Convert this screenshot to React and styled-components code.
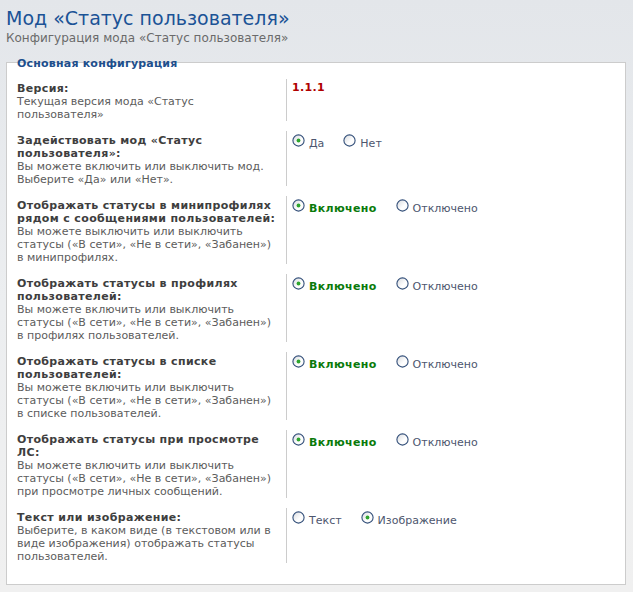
import React from 'react';
import styled, { createGlobalStyle } from 'styled-components';

const GlobalStyle = createGlobalStyle`
  html, body {
    margin: 0;
    padding: 0;
  }
  body {
    background: linear-gradient(#e3e6ea 0, #eceef0 300px, #f0f0f0 592px);
    min-height: 592px;
    font-family: "DejaVu Sans", Verdana, sans-serif;
  }
`;

const Page = styled.div`
  padding: 6px 7px 7px 6px;
`;

const Title = styled.h1`
  margin: 0;
  font-size: 19px;
  font-weight: normal;
  line-height: 24px;
  color: #1b5396;
`;

const Subtitle = styled.div`
  font-size: 12px;
  line-height: 16px;
  color: #6a6a6a;
  margin-bottom: 16px;
`;

const Box = styled.div`
  background: #fff;
  border: 1px solid #cccccc;
  padding: 0 10px 21px 10px;
`;

const Legend = styled.div`
  font-size: 11px;
  font-weight: bold;
  letter-spacing: 0.2px;
  line-height: 14px;
  color: #1d4f8d;
  margin: -6px 0 0 0;
  height: 22px;
`;

const Row = styled.div`
  display: flex;
  margin-bottom: 10px;
  &:last-child {
    margin-bottom: 0;
  }
`;

const Label = styled.div`
  width: 260px;
  padding-right: 9px;
  flex: none;
  padding-top: 3px;
  font-size: 11px;
  line-height: 13px;
`;

const Name = styled.div`
  font-weight: bold;
  letter-spacing: 0.35px;
  color: #3e3e3e;
`;

const Hint = styled.div`
  color: #5c5c5c;
`;

const Value = styled.div`
  flex: 1;
  border-left: 1px solid #cccccc;
  padding-left: 5px;
  font-size: 11px;
  line-height: 13px;
`;

const Version = styled.div`
  padding-top: 2px;
  font-weight: bold;
  letter-spacing: 0.35px;
  color: #b00000;
`;

const Options = styled.div`
  display: flex;
  gap: 19px;
  padding-top: 3px;
`;

const Option = styled.label`
  display: flex;
  align-items: flex-start;
  gap: 4px;
  color: ${({ $strong }) => ($strong ? '#0a7a0a' : '#4d566e')};
  font-weight: ${({ $strong }) => ($strong ? 'bold' : 'normal')};
  letter-spacing: ${({ $strong }) => ($strong ? '0.35px' : '0')};
  span {
    padding-top: 3px;
  }
`;

const RadioIcon = ({ checked }) => (
  <svg width="13" height="13" viewBox="0 0 13 13">
    <defs>
      <linearGradient id="rg" x1="0" y1="0" x2="1" y2="1">
        <stop offset="0" stopColor="#d6d9dd" />
        <stop offset="0.6" stopColor="#ffffff" />
        <stop offset="1" stopColor="#f4f4f4" />
      </linearGradient>
    </defs>
    <circle cx="6.5" cy="6.5" r="5.6" fill="url(#rg)" stroke="#34507a" strokeWidth="1.1" />
    {checked && <circle cx="6.5" cy="6.5" r="1.9" fill="#2ea52e" />}
  </svg>
);

const Radio = ({ checked, strong, children }) => (
  <Option $strong={strong}>
    <RadioIcon checked={checked} />
    <span>{children}</span>
  </Option>
);

const onOff = [
  {
    name: 'Отображать статусы в минипрофилях рядом с сообщениями пользователей:',
    hint: 'Вы можете выключить или выключить статусы («В сети», «Не в сети», «Забанен») в минипрофилях.',
  },
  {
    name: 'Отображать статусы в профилях пользователей:',
    hint: 'Вы можете включить или выключить статусы («В сети», «Не в сети», «Забанен») в профилях пользователей.',
  },
  {
    name: 'Отображать статусы в списке пользователей:',
    hint: 'Вы можете включить или выключить статусы («В сети», «Не в сети», «Забанен») в списке пользователей.',
  },
  {
    name: 'Отображать статусы при просмотре ЛС:',
    hint: 'Вы можете включить или выключить статусы («В сети», «Не в сети», «Забанен») при просмотре личных сообщений.',
  },
];

export default function App() {
  return (
    <Page>
      <GlobalStyle />
      <Title>Мод «Статус пользователя»</Title>
      <Subtitle>Конфигурация мода «Статус пользователя»</Subtitle>
      <Box>
        <Legend>Основная конфигурация</Legend>
        <Row>
          <Label>
            <Name>Версия:</Name>
            <Hint>Текущая версия мода «Статус пользователя»</Hint>
          </Label>
          <Value>
            <Version>1.1.1</Version>
          </Value>
        </Row>
        <Row>
          <Label>
            <Name>Задействовать мод «Статус пользователя»:</Name>
            <Hint>Вы можете включить или выключить мод. Выберите «Да» или «Нет».</Hint>
          </Label>
          <Value>
            <Options>
              <Radio checked>Да</Radio>
              <Radio>Нет</Radio>
            </Options>
          </Value>
        </Row>
        {onOff.map((item) => (
          <Row key={item.name}>
            <Label>
              <Name>{item.name}</Name>
              <Hint>{item.hint}</Hint>
            </Label>
            <Value>
              <Options>
                <Radio checked strong>Включено</Radio>
                <Radio>Отключено</Radio>
              </Options>
            </Value>
          </Row>
        ))}
        <Row>
          <Label>
            <Name>Текст или изображение:</Name>
            <Hint>
              Выберите, в каком виде (в текстовом или в виде изображения) отображать статусы
              пользователей.
            </Hint>
          </Label>
          <Value>
            <Options>
              <Radio>Текст</Radio>
              <Radio checked>Изображение</Radio>
            </Options>
          </Value>
        </Row>
      </Box>
    </Page>
  );
}
